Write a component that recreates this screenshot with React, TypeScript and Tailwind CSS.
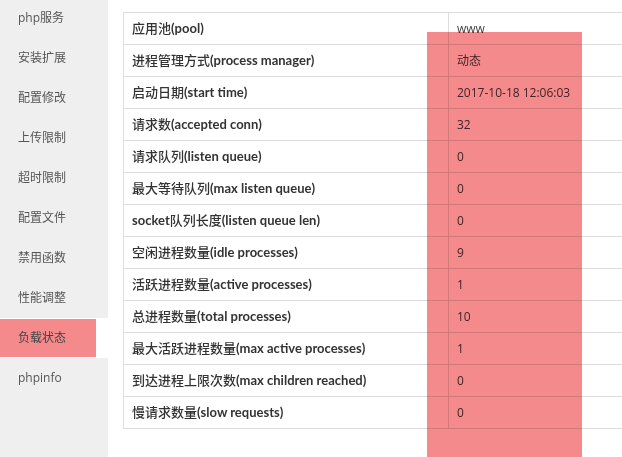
const menu = [
  "php服务",
  "安装扩展",
  "配置修改",
  "上传限制",
  "超时限制",
  "配置文件",
  "禁用函数",
  "性能调整",
  "负载状态",
  "phpinfo",
];

const rows: [string, string][] = [
  ["应用池(pool)", "www"],
  ["进程管理方式(process manager)", "动态"],
  ["启动日期(start time)", "2017-10-18 12:06:03"],
  ["请求数(accepted conn)", "32"],
  ["请求队列(listen queue)", "0"],
  ["最大等待队列(max listen queue)", "0"],
  ["socket队列长度(listen queue len)", "0"],
  ["空闲进程数量(idle processes)", "9"],
  ["活跃进程数量(active processes)", "1"],
  ["总进程数量(total processes)", "10"],
  ["最大活跃进程数量(max active processes)", "1"],
  ["到达进程上限次数(max children reached)", "0"],
  ["慢请求数量(slow requests)", "0"],
];

const font = {
  fontFamily: '"Open Sans", "Noto Sans CJK SC", sans-serif',
};

// latin runs bold, CJK runs medium
const Label = ({ text }: { text: string }) => (
  <>
    {text.split(/([\x20-\x7e]+)/).map((part, i) =>
      /^[\x20-\x7e]+$/.test(part) ? (
        <span key={i} className="font-bold" style={{ fontFamily: "Lato, sans-serif" }}>
          {part}
        </span>
      ) : (
        <span key={i} className="font-medium">
          {part}
        </span>
      )
    )}
  </>
);

export default function App() {
  return (
    <div
      className="relative flex h-[457px] w-[622px] overflow-hidden bg-white"
      style={font}
    >
      <div className="h-full w-[108px] shrink-0 bg-[#efefef]">
        <div className="-mt-0.5">
          {menu.map((m) =>
            m === "负载状态" ? (
              <div key={m} className="flex h-10 items-center bg-white">
                <div className="flex h-[38px] w-[96px] items-center bg-[#f48a8c] pl-[18px] text-xs text-[#444]">
                  {m}
                </div>
              </div>
            ) : (
              <div
                key={m}
                className="flex h-10 items-center pl-[18px] text-xs text-[#555]"
              >
                {m}
              </div>
            )
          )}
        </div>
      </div>

      <div className="pl-[15px] pt-3">
        <table className="w-[540px] border-collapse border-l border-t border-[#ddd]">
          <tbody>
            {rows.map(([k, v]) => (
              <tr key={k} className="h-8 border-b border-[#ddd]">
                <td className="w-[325px] border-r border-[#ddd] pl-2 text-[13px] text-[#333]">
                  <Label text={k} />
                </td>
                <td className="pl-2 text-xs text-[#444]">{v}</td>
              </tr>
            ))}
          </tbody>
        </table>
      </div>

      <div className="absolute left-[427px] top-8 h-[425px] w-[155px] bg-[#f48a8c] mix-blend-multiply" />
    </div>
  );
}
